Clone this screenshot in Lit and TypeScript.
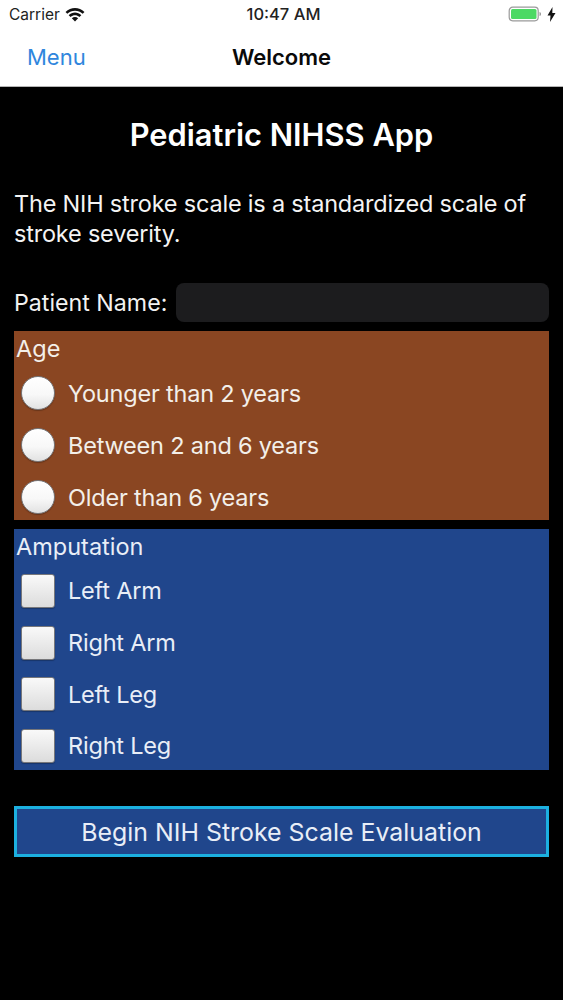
import { LitElement, html, css } from "lit";
import { customElement } from "lit/decorators.js";

@customElement("app-root")
export class AppRoot extends LitElement {
  static styles = css`
    :host { display: block; width: 563px; height: 1000px; background: #000; font-family: Inter, "Liberation Sans", sans-serif; overflow: hidden; }
    .top { background: #fff; height: 86px; border-bottom: 1px solid #b5b5b5; display: flex; flex-direction: column; }
    .status { height: 28px; display: grid; grid-template-columns: 1fr auto 1fr; align-items: center; padding: 0 7px 0 9px; font-size: 15.5px; color: #222; }
    .sl { display: flex; align-items: center; gap: 5px; }
    .sr { display: flex; justify-content: flex-end; align-items: center; gap: 5px; }
    .time { font-weight: 500; font-size: 16.5px; padding-left: 2px; }
    .nav { flex: 1; display: grid; grid-template-columns: 1fr auto 1fr; align-items: center; padding: 0 27px 1px; font-size: 22px; }
    .menu { color: #2f86dd; }
    .title { color: #0a0a0a; font-weight: 600; }
    .body { padding: 0 14px; color: #fff; display: flex; flex-direction: column; }
    h1 { margin: 30px 0 0; height: 36px; line-height: 36px; text-align: center; font-size: 30.8px; font-weight: 600; }
    .intro { margin: 36px 0 0; font-size: 23.5px; line-height: 30px; letter-spacing: -0.2px; color: #f4f4f4; }
    .name { margin-top: 34px; height: 39px; display: flex; align-items: center; gap: 9px; font-size: 23.2px; color: #f2f2f2; }
    .input { flex: 1; height: 39px; background: #1c1c1e; border-radius: 8px; }
    .panel { margin-top: 9px; padding: 4px 3px 0 3px; display: flex; flex-direction: column; color: #f3efe9; font-size: 23.5px; }
    .age { background: #8a4622; height: 189px; box-sizing: border-box; }
    .amp { background: #20468c; height: 241px; box-sizing: border-box; color: #e9eef7; }
    .legend { height: 28px; line-height: 28px; margin-left: -1px; flex: none; }
    .opt { height: 52px; flex: none; display: flex; align-items: center; gap: 13px; padding-left: 4px; letter-spacing: -0.2px; }
    .amp .opt { height: 51.7px; }
    .first { margin-top: 4px; }
    .mark { width: 34px; height: 34px; flex: none; box-sizing: border-box; border: 1px solid #77777a; box-shadow: 0 1px 1px rgba(0,0,0,.25); }
    .radio { border-radius: 50%; background: linear-gradient(#ffffff 0%, #f8f8f8 55%, #e2e2e2 100%); }
    .check { border-radius: 3px; background: linear-gradient(#f9f9f9 0%, #e9e9e9 55%, #dcdcdc 100%); }
    .begin { margin-top: 36px; height: 51px; box-sizing: border-box; border: 3px solid #1cb0e0; background: #20468c; color: #e9eef7; display: flex; align-items: center; justify-content: center; font-size: 24.9px; }
    svg { display: block; }
  `;

  render() {
    const ages = ["Younger than 2 years", "Between 2 and 6 years", "Older than 6 years"];
    const limbs = ["Left Arm", "Right Arm", "Left Leg", "Right Leg"];
    return html`
      <div class="top">
        <div class="status">
          <div class="sl">
            <span>Carrier</span>
            <svg width="20" height="15" viewBox="0 0 19 14">
              <path d="M.5 4.600C5.500-.4 13.500-.4 18.500 4.600l-1.700 1.800C12.800 2.500 6.200 2.500 2.200 6.400Z" fill="#111"/>
              <path d="M3.500 7.600C6.800 4.300 12.200 4.300 15.500 7.600l-1.800 1.800C11.300 7.100 7.700 7.100 5.300 9.400Z" fill="#111"/>
              <path d="M6.500 10.500C8.200 8.900 10.800 8.900 12.500 10.500L9.500 13.600Z" fill="#111"/>
            </svg>
          </div>
          <div class="time">10:47 AM</div>
          <div class="sr">
            <svg width="34" height="16" viewBox="0 0 33 16">
              <rect x="0.700" y="1.200" width="29" height="13.600" rx="3.500" fill="none" stroke="#9a9a9a" stroke-width="1.200"/>
              <rect x="2.500" y="3" width="25.500" height="10" rx="1.500" fill="#4cd964"/>
              <path d="M31 6v4c1 0 1.500-1 1.500-2s-.5-2-1.500-2Z" fill="#9a9a9a"/>
            </svg>
            <svg width="9" height="15" viewBox="0 0 9 15"><path d="M5.500 0 .5 8.500h3L3 15l5.500-9h-3.200Z" fill="#111"/></svg>
          </div>
        </div>
        <div class="nav"><span class="menu">Menu</span><span class="title">Welcome</span><span></span></div>
      </div>
      <div class="body">
        <h1>Pediatric NIHSS App</h1>
        <p class="intro">The NIH stroke scale is a standardized scale of stroke severity.</p>
        <div class="name"><span>Patient Name:</span><div class="input"></div></div>
        <div class="panel age">
          <div class="legend">Age</div>
          ${ages.map((a, i) => html`<div class="opt ${i === 0 ? "first" : ""}"><span class="mark radio"></span><span>${a}</span></div>`)}
        </div>
        <div class="panel amp">
          <div class="legend">Amputation</div>
          ${limbs.map((a, i) => html`<div class="opt ${i === 0 ? "first" : ""}"><span class="mark check"></span><span>${a}</span></div>`)}
        </div>
        <div class="begin">Begin NIH Stroke Scale Evaluation</div>
      </div>
    `;
  }
}
